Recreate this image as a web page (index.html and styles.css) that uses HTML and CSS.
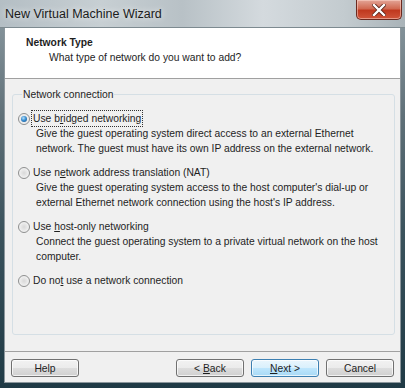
FILE: index.html
```html
<!DOCTYPE html>
<html>
	<head>
		<meta charset="utf-8">
		<title>New Virtual Machine Wizard</title>
		<link rel="stylesheet" href="styles.css">
	</head>
	<body>
		<div class="window">
			<div class="titlebar">
				<span class="title">New Virtual Machine Wizard</span>
				<a class="close" href="javascript:void(0)">
					<svg width="14" height="12" viewBox="0 0 14 12">
						<path d="M2 1 L12 11 M12 1 L2 11" stroke="#5a2418" stroke-width="4" stroke-linecap="square" />
						<path d="M2 1 L12 11 M12 1 L2 11" stroke="#fff" stroke-width="2.4" stroke-linecap="square" />
					</svg>
				</a>
			</div>
			<div class="client">
				<div class="header">
					<div class="head-title">Network Type</div>
					<div class="head-sub">What type of network do you want to add?</div>
				</div>
				<div class="content">
					<fieldset class="group">
						<legend>Network connection</legend>
						<div class="option">
							<label class="radio-row">
								<span class="radio checked"></span>
								<span class="focus">Use b<u>r</u>idged networking</span>
							</label>
							<p class="desc">Give the guest operating system direct access to an external Ethernet<br>network. The guest must have its own IP address on the external network.</p>
						</div>
						<div class="option">
							<label class="radio-row">
								<span class="radio"></span>
								<span>Use n<u>e</u>twork address translation (NAT)</span>
							</label>
							<p class="desc">Give the guest operating system access to the host computer's dial-up or<br>external Ethernet network connection using the host's IP address.</p>
						</div>
						<div class="option">
							<label class="radio-row">
								<span class="radio"></span>
								<span>Use <u>h</u>ost-only networking</span>
							</label>
							<p class="desc">Connect the guest operating system to a private virtual network on the host<br>computer.</p>
						</div>
						<div class="option">
							<label class="radio-row">
								<span class="radio"></span>
								<span>Do no<u>t</u> use a network connection</span>
							</label>
						</div>
					</fieldset>
				</div>
				<div class="footer">
					<button class="btn">Help</button>
					<div class="spacer"></div>
					<button class="btn">&lt; <u>B</u>ack</button>
					<button class="btn default"><u>N</u>ext &gt;</button>
					<button class="btn">Cancel</button>
				</div>
			</div>
		</div>
	</body>
</html>
```

FILE: styles.css
```css
*{
	padding: 0;
	margin: 0;
	box-sizing: border-box;
}
a{
	text-decoration: none;
}
html,body{
	width: 405px;
	height: 388px;
	overflow: hidden;
}
body{
	font-family: "Liberation Sans", Arial, sans-serif;
	font-size: 10.3px;
	color: #1e1e1e;
	background: #24404c;
}
.window{
	width: 405px;
	height: 388px;
	display: flex;
	flex-direction: column;
	background: linear-gradient(180deg, #8e9ca3 0%, #5f7078 30%, #3a525c 60%, #1f3a45 100%);
	padding: 0 4px 5px 4px;
}
.titlebar{
	height: 28px;
	margin: 0 -4px;
	padding-left: 5px;
	display: flex;
	align-items: flex-start;
	justify-content: space-between;
	background: linear-gradient(90deg, #b4bec4 0%, #c7cfd3 25%, #b8c1c6 45%, #d4dade 65%, #c3cbcf 85%, #a9b3b8 100%);
	border-bottom: 1px solid #7d8a90;
}
.title{
	font-size: 12.5px;
	line-height: 28px;
	color: #1b1b1b;
	text-shadow: 0 0 6px rgba(255,255,255,0.9);
}
.close{
	width: 46px;
	height: 20px;
	margin-right: 3px;
	display: flex;
	align-items: center;
	justify-content: center;
	border: 1px solid #6b2a20;
	border-top: none;
	border-radius: 0 0 5px 5px;
	background: linear-gradient(180deg, #e3a597 0%, #d16a52 45%, #c0391f 55%, #d0553a 100%);
	box-shadow: inset 0 0 0 1px rgba(255,220,210,0.5);
}
.client{
	flex: 1;
	display: flex;
	flex-direction: column;
	background: #f0f0f0;
	border: 1px solid #8b969c;
	border-top: none;
}
.header{
	height: 51px;
	background: #fff;
	border-bottom: 1px solid #a0a0a0;
	padding: 7px 0 0 21px;
}
.head-title{
	font-weight: bold;
	line-height: 15px;
}
.head-sub{
	line-height: 15px;
	padding-left: 23px;
}
.content{
	flex: 1;
	padding: 8px 5px 0 7px;
}
.group{
	border: 1px solid #d5dfe5;
	border-radius: 3px;
	height: 248px;
	padding: 9px 0 0 5px;
}
.group legend{
	margin-left: 4px;
	padding: 0 1px;
	line-height: 15px;
}
.option{
	margin-bottom: 9px;
}
.radio-row{
	display: flex;
	align-items: center;
	height: 15px;
	line-height: 15px;
}
.radio{
	width: 12px;
	height: 12px;
	margin-right: 3px;
	border: 1px solid #8e8f8f;
	border-radius: 50%;
	background: radial-gradient(circle at 50% 50%, #d8d8d8 0%, #eeeeee 60%, #f8f8f8 100%);
	position: relative;
}
.radio.checked::after{
	content: "";
	position: absolute;
	left: 2px;
	top: 2px;
	width: 6px;
	height: 6px;
	border-radius: 50%;
	background: radial-gradient(circle at 40% 35%, #b6e0fb 0%, #3b8fd1 45%, #0f4b8a 100%);
}
.focus{
	outline: 1px dotted #333;
	padding: 0 1px;
	margin-left: -1px;
}
.desc{
	padding-left: 18px;
	line-height: 15px;
	white-space: nowrap;
}
.footer{
	height: 31px;
	border-top: 1px solid #a0a0a0;
	padding: 7px 6px 0 6px;
	display: flex;
	align-items: flex-start;
	gap: 7px;
}
.spacer{
	flex: 1;
}
.btn{
	width: 68px;
	height: 18px;
	font-family: "Liberation Sans", Arial, sans-serif;
	font-size: 10.3px;
	color: #1e1e1e;
	border: 1px solid #707070;
	border-radius: 3px;
	background: linear-gradient(180deg, #f2f2f2 0%, #ebebeb 50%, #dddddd 51%, #cfcfcf 100%);
	box-shadow: inset 0 0 0 1px rgba(255,255,255,0.7);
}
.btn.default{
	border-color: #3c7fb1;
	background: linear-gradient(180deg, #eaf6fd 0%, #d9f0fc 50%, #bee6fd 51%, #a7d9f5 100%);
}
```
